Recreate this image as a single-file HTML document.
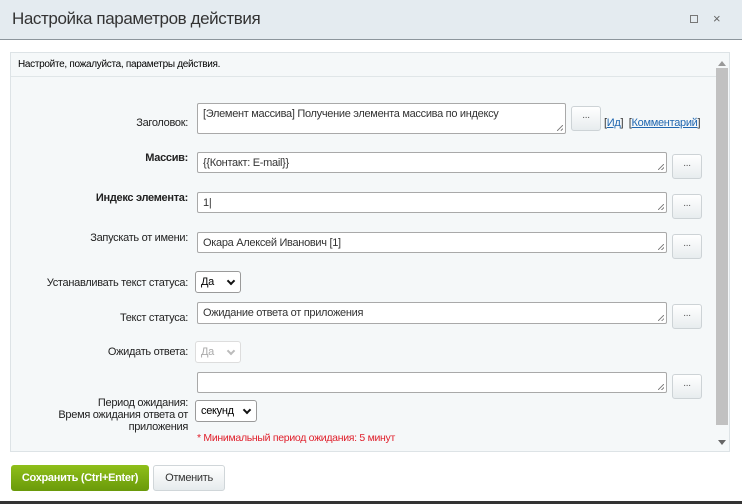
<!DOCTYPE html>
<html><head><meta charset="utf-8"><style>
*{box-sizing:border-box;margin:0;padding:0}
body{width:742px;height:504px;overflow:hidden;background:#fff;font-family:"Liberation Sans",sans-serif;font-size:11px;color:#000;position:relative;letter-spacing:-0.3px}
.a{position:absolute}
.hdr{left:0;top:0;width:742px;height:40px;background:#e4ebf0;border-bottom:1px solid #8c959c}
.title{left:12px;top:9px;font-size:17px;color:#333;letter-spacing:-0.4px}
.panel{left:10px;top:52px;width:720px;height:400px;background:#f5f8f9;border:1px solid #dde3e6}
.sep{left:11px;top:76px;width:705px;height:1px;background:#e0e6e8}
.sb{left:716px;top:68px;width:12px;height:357px;background:#c1c1c1}
.ta{background:#fff;border:1px solid #a9a9a9;border-radius:2px;padding:4px 5px;color:#333;font-size:11px}
.ta:after{content:"";position:absolute;right:2px;bottom:2px;width:6px;height:6px;background:linear-gradient(135deg,transparent 45%,#888 45%,#888 55%,transparent 55%,transparent 75%,#888 75%,#888 85%,transparent 85%)}
.btn{width:30px;height:25px;border:1px solid #cdd3d6;border-radius:3px;background:linear-gradient(#fff,#e7ecee);text-align:center;font-size:10px;line-height:18px;color:#555}
.lbl{text-align:right;width:188px;left:0;color:#222}
.sel{background:#fff;border:1px solid #9a9a9a;border-radius:3px;padding:4px 5px;font-size:11px}
.sel b{position:absolute;right:6px;top:6px;width:6px;height:6px;border-right:2px solid #111;border-bottom:2px solid #111;transform:rotate(45deg)}
</style></head><body>
<div class="a hdr"></div>
<div class="a title">Настройка параметров действия</div>
<div class="a" style="left:690px;top:15px;width:8px;height:8px;border:1px solid #777"></div>
<div class="a" style="left:713px;top:11px;font-size:13px;color:#666">×</div>
<div class="a panel"></div>
<div class="a" style="left:18px;top:59px;font-size:10px">Настройте, пожалуйста, параметры действия.</div>
<div class="a sep"></div>
<div class="a" style="left:718px;top:57px;width:0;height:0;border:4px solid transparent;border-bottom:5px solid #999"></div>
<div class="a" style="left:718px;top:440px;width:0;height:0;border:4px solid transparent;border-top:5px solid #666"></div>
<div class="a sb"></div>

<div class="a lbl" style="top:117px">Заголовок:</div>
<div class="a ta" style="left:197px;top:103px;width:369px;height:31px">[Элемент массива] Получение элемента массива по индексу</div>
<div class="a btn" style="left:571px;top:106px">...</div>
<div class="a" style="left:604px;top:117px;color:#333">[<u style="color:#2067b0">Ид</u>]&nbsp; [<u style="color:#2067b0">Комментарий</u>]</div>

<div class="a lbl" style="top:152px;font-weight:bold">Массив:</div>
<div class="a ta" style="left:197px;top:152px;width:470px;height:21px">{{Контакт: E-mail}}</div>
<div class="a btn" style="left:672px;top:154px">...</div>

<div class="a lbl" style="top:192px;font-weight:bold">Индекс элемента:</div>
<div class="a ta" style="left:197px;top:192px;width:470px;height:21px">1|</div>
<div class="a btn" style="left:672px;top:194px">...</div>

<div class="a lbl" style="top:232px">Запускать от имени:</div>
<div class="a ta" style="left:197px;top:232px;width:470px;height:21px">Окара Алексей Иванович [1]</div>
<div class="a btn" style="left:672px;top:234px">...</div>

<div class="a lbl" style="top:277px">Устанавливать текст статуса:</div>
<div class="a sel" style="left:195px;top:271px;width:46px;height:22px">Да<b></b></div>

<div class="a lbl" style="top:312px">Текст статуса:</div>
<div class="a ta" style="left:197px;top:302px;width:470px;height:22px">Ожидание ответа от приложения</div>
<div class="a btn" style="left:672px;top:304px">...</div>

<div class="a lbl" style="top:346px">Ожидать ответа:</div>
<div class="a sel" style="left:195px;top:341px;width:46px;height:22px;border-color:#ddd;color:#aaa">Да<b style="border-color:#bbb"></b></div>

<div class="a ta" style="left:197px;top:372px;width:470px;height:21px"></div>
<div class="a btn" style="left:672px;top:374px">...</div>
<div class="a lbl" style="top:397px;line-height:12px">Период ожидания:<br>Время ожидания ответа от<br>приложения</div>
<div class="a sel" style="left:195px;top:400px;width:62px;height:22px">секунд<b></b></div>
<div class="a" style="left:197px;top:432px;color:#e0202c;font-size:10.5px">* Минимальный период ожидания: 5 минут</div>

<div class="a" style="left:11px;top:465px;width:138px;height:26px;border-radius:3px;background:linear-gradient(#8fbf1a,#6a9a0a);color:#fff;font-weight:bold;text-align:center;line-height:26px">Сохранить (Ctrl+Enter)</div>
<div class="a" style="left:153px;top:465px;width:72px;height:26px;border-radius:3px;border:1px solid #d0d6d9;background:linear-gradient(#fff,#e6ebed);color:#333;text-align:center;line-height:24px">Отменить</div>
<div class="a" style="left:0;top:501px;width:742px;height:3px;background:#333"></div>
</body></html>
